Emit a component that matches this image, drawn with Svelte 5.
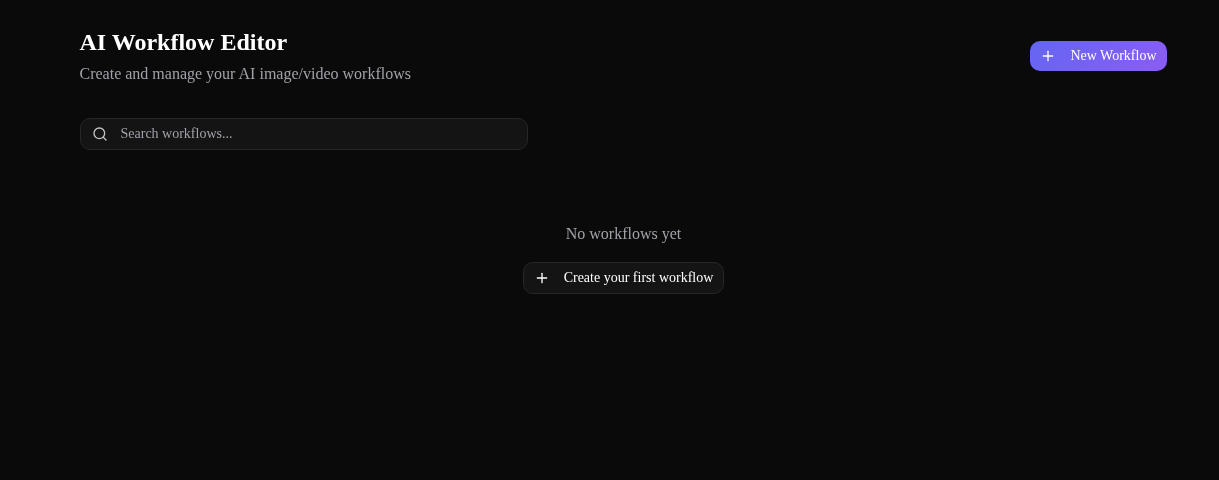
<script>
  let query = $state('');
</script>

<div class="page">
  <header class="top">
    <div>
      <h1>AI Workflow Editor</h1>
      <p class="sub">Create and manage your AI image/video workflows</p>
    </div>
    <button class="primary">
      <svg width="16" height="16" viewBox="0 0 24 24" fill="none" stroke="currentColor" stroke-width="2" stroke-linecap="round" stroke-linejoin="round"><path d="M5 12h14" /><path d="M12 5v14" /></svg>
      New Workflow
    </button>
  </header>

  <div class="search">
    <svg width="16" height="16" viewBox="0 0 24 24" fill="none" stroke="currentColor" stroke-width="2" stroke-linecap="round" stroke-linejoin="round"><circle cx="11" cy="11" r="8" /><path d="m21 21-4.3-4.3" /></svg>
    <input type="text" placeholder="Search workflows..." bind:value={query} />
  </div>

  <div class="empty">
    <p>No workflows yet</p>
    <button class="ghost">
      <svg width="16" height="16" viewBox="0 0 24 24" fill="none" stroke="currentColor" stroke-width="2" stroke-linecap="round" stroke-linejoin="round"><path d="M5 12h14" /><path d="M12 5v14" /></svg>
      Create your first workflow
    </button>
  </div>
</div>

<style>
  :global(body) {
    margin: 0;
    background: #0a0a0a;
    font-family: "Liberation Serif", "Times New Roman", serif;
  }
  .page {
    min-height: 480px;
    box-sizing: border-box;
    width: 1219px;
    padding: 24px 51.5px 0 79.5px;
    color: #fff;
    will-change: opacity;
  }
  .top {
    display: flex;
    justify-content: space-between;
    align-items: center;
    margin-bottom: 32px;
  }
  h1 {
    margin: 0 0 2px;
    font-size: 24px;
    line-height: 36px;
    font-weight: 700;
  }
  .sub {
    margin: 0;
    font-size: 16px;
    line-height: 24px;
    color: #a1a1aa;
  }
  button {
    display: inline-flex;
    align-items: center;
    gap: 14px;
    font-family: inherit;
    font-size: 14px;
    color: #fff;
    cursor: pointer;
  }
  .primary {
    height: 30px;
    margin: 2px 0.5px 0 0;
    padding: 0 10.5px 0 10px;
    gap: 14.5px;
    border: none;
    border-radius: 10px;
    background: linear-gradient(135deg, #6366f1, #8b5cf6);
  }
  .search {
    display: flex;
    align-items: center;
    gap: 13px;
    width: 448px;
    height: 32px;
    box-sizing: border-box;
    padding: 0 12px 0 11px;
    background: #141414;
    border: 1px solid #27272a;
    border-radius: 10px;
    color: #a1a1aa;
  }
  .search svg { flex: none; color: #c4c4c8; }
  .search input {
    flex: 1;
    min-width: 0;
    padding: 0;
    border: none;
    outline: none;
    background: transparent;
    font-family: inherit;
    font-size: 14px;
    color: #fff;
  }
  .search input::placeholder { color: #a1a1aa; opacity: 1; }
  .empty {
    display: flex;
    flex-direction: column;
    align-items: center;
    padding-top: 72px;
  }
  .empty p {
    margin: 0 0 16px;
    font-size: 16px;
    line-height: 24px;
    color: #a1a1aa;
  }
  .ghost {
    height: 32px;
    padding: 0 10px;
    background: #141414;
    border: 1px solid #27272a;
    border-radius: 10px;
  }
</style>
